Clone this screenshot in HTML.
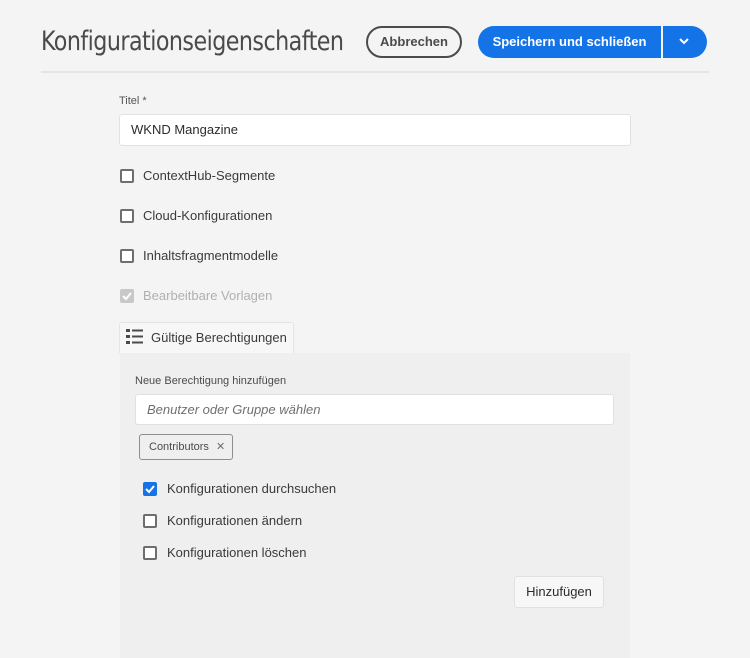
<!DOCTYPE html>
<html><head><style>
*{box-sizing:border-box;margin:0;padding:0}
body{width:750px;height:658px;background:#f4f4f4;font-family:"Liberation Sans",sans-serif;color:#2c2c2c;position:relative;overflow:hidden}
.a{position:absolute}
h1{position:absolute;left:41px;top:26px;font-size:27px;color:#4a4a4a;letter-spacing:-0.6px;font-family:"DejaVu Sans Condensed","Liberation Sans",sans-serif;font-weight:normal;transform:scaleX(0.915);transform-origin:left}
.cb{position:absolute;width:14px;height:14px;border:2px solid #6e6e6e;border-radius:2px;background:#fff}
.lbl{position:absolute;font-size:13px;color:#3a3a3a}
</style></head><body>
<h1>Konfigurationseigenschaften</h1>
<div class="a" style="left:366px;top:26px;width:96px;height:32px;border:2px solid #4b4b4b;border-radius:16px;font-size:13px;font-weight:bold;text-align:center;line-height:28px;color:#4b4b4b">Abbrechen</div>
<div class="a" style="left:478px;top:26px;width:183px;height:32px;background:#1473e6;border-radius:16px 0 0 16px;color:#fff;font-size:13px;font-weight:bold;text-align:center;line-height:32px">Speichern und schließen</div>
<div class="a" style="left:663px;top:26px;width:44px;height:32px;background:#1473e6;border-radius:0 16px 16px 0"><svg width="44" height="32"><path d="M17 13l4 4 4-4" stroke="#fff" stroke-width="2" fill="none"/></svg></div>
<div class="a" style="left:41px;top:71px;width:668px;height:2px;background:#e4e4e4"></div>
<div class="lbl" style="left:119px;top:95px;font-size:11px;color:#555">Titel *</div>
<div class="a" style="left:119px;top:114px;width:512px;height:32px;background:#fff;border:1px solid #e1e1e1;border-radius:3px;font-size:13px;line-height:30px;padding-left:11px">WKND Mangazine</div>
<div class="cb" style="left:120px;top:169px"></div><div class="lbl" style="left:143px;top:168px">ContextHub-Segmente</div>
<div class="cb" style="left:120px;top:209px"></div><div class="lbl" style="left:143px;top:208px">Cloud-Konfigurationen</div>
<div class="cb" style="left:120px;top:249px"></div><div class="lbl" style="left:143px;top:248px">Inhaltsfragmentmodelle</div>
<div class="a" style="left:120px;top:289px;width:14px;height:14px;background:#c8c8c8;border-radius:2px"><svg width="14" height="14"><path d="M3 7l3 3 5-6" stroke="#fff" stroke-width="2" fill="none"/></svg></div><div class="lbl" style="left:143px;top:288px;color:#b0b0b0">Bearbeitbare Vorlagen</div>
<div class="a" style="left:120px;top:353px;width:510px;height:305px;background:#efefef"></div>
<div class="a" style="left:119px;top:322px;width:175px;height:31px;background:#f7f7f7;border:1px solid #e4e4e4;border-bottom:none;border-radius:3px 3px 0 0"></div>
<svg class="a" style="left:126px;top:329px" width="18" height="16"><g fill="#4b4b4b"><rect x="0" y="0" width="4" height="3"/><rect x="6" y="0.5" width="11" height="2"/><rect x="0" y="6" width="4" height="3"/><rect x="6" y="6.5" width="11" height="2"/><rect x="0" y="12" width="4" height="3"/><rect x="6" y="12.5" width="11" height="2"/></g></svg>
<div class="lbl" style="left:151px;top:330px">Gültige Berechtigungen</div>
<div class="lbl" style="left:135px;top:375px;font-size:11px;color:#4b4b4b">Neue Berechtigung hinzufügen</div>
<div class="a" style="left:135px;top:394px;width:479px;height:31px;background:#fff;border:1px solid #e1e1e1;border-radius:3px;font-size:13px;font-style:italic;color:#707070;line-height:29px;padding-left:11px">Benutzer oder Gruppe wählen</div>
<div class="a" style="left:139px;top:434px;width:94px;height:26px;border:1px solid #8e8e8e;border-radius:3px;font-size:11px;line-height:24px;padding-left:9px;color:#4b4b4b">Contributors <span style="margin-left:4px;color:#6e6e6e">✕</span></div>
<div class="a" style="left:143px;top:482px;width:14px;height:14px;background:#1473e6;border-radius:2px"><svg width="14" height="14"><path d="M3 7l3 3 5-6" stroke="#fff" stroke-width="2" fill="none"/></svg></div><div class="lbl" style="left:167px;top:481px">Konfigurationen durchsuchen</div>
<div class="cb" style="left:143px;top:514px"></div><div class="lbl" style="left:167px;top:513px">Konfigurationen ändern</div>
<div class="cb" style="left:143px;top:546px"></div><div class="lbl" style="left:167px;top:545px">Konfigurationen löschen</div>
<div class="a" style="left:514px;top:576px;width:90px;height:32px;background:#f7f7f7;border:1px solid #e1e1e1;border-radius:3px;font-size:13px;text-align:center;line-height:30px">Hinzufügen</div>
</body></html>
